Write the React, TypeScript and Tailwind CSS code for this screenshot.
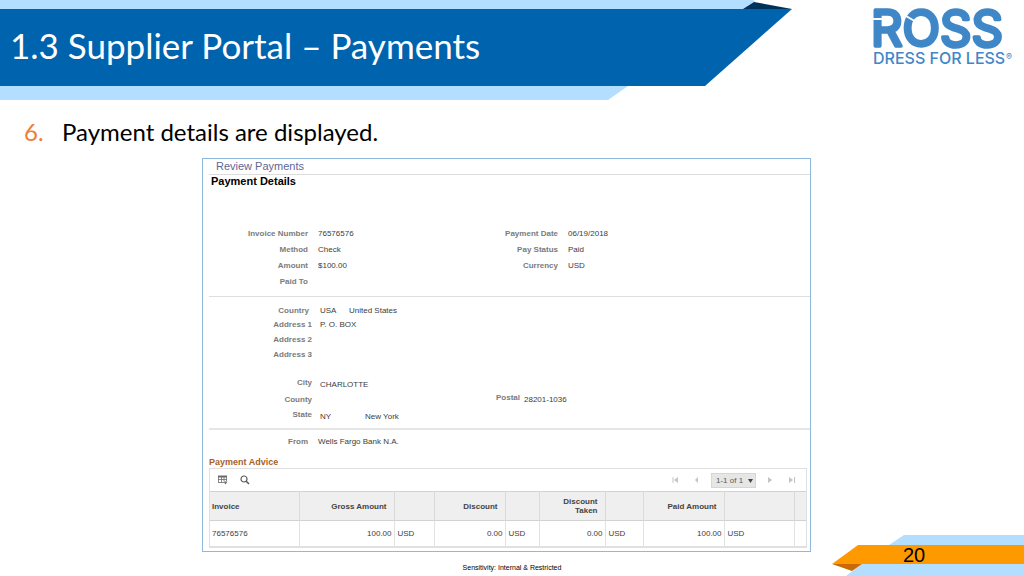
import type { ReactNode } from "react";

interface Field {
  label: string;
  value?: ReactNode;
}

const paymentFields: Field[] = [
  { label: "Invoice Number", value: "76576576" },
  { label: "Method", value: "Check" },
  { label: "Amount", value: "$100.00" },
  { label: "Paid To" },
];

const statusFields: Field[] = [
  { label: "Payment Date", value: "06/19/2018" },
  { label: "Pay Status", value: "Paid" },
  { label: "Currency", value: "USD" },
];

const streetFields: Field[] = [
  { label: "Address 1", value: "P. O. BOX" },
  { label: "Address 2" },
  { label: "Address 3" },
];

const adviceRows = [
  { invoice: "76576576", gross: "100.00", discount: "0.00", taken: "0.00", paid: "100.00", currency: "USD" },
];

export default function App() {
  return (
    <div className="relative flex min-h-screen flex-col bg-white font-['Liberation_Sans',sans-serif] text-black">
      <SlideHeader />
      <main className="flex-1 pb-6">
        <ol className="flex h-[58px] items-center pt-[6px] pl-6 font-[Lato,sans-serif] text-[24px] leading-7">
          <li className="flex">
            <span className="w-[38px] text-[#ed7d31]">6.</span>
            <span>Payment details are displayed.</span>
          </li>
        </ol>
        <div className="pr-[213px] pl-[202px]">
          <ReviewPayments />
        </div>
      </main>
      <SlideFooter />
    </div>
  );
}

function SlideHeader() {
  return (
    <header className="relative flex h-[100px] justify-between">
      <svg className="absolute top-0 left-0" width="792" height="100" viewBox="0 0 792 100" aria-hidden="true">
        <path d="M0 0H757L628 86L608 100H0Z" fill="#b3deff" />
        <path d="M743 9L754 2L792 9Z" fill="#00315a" />
        <path d="M752 0H780V1.500H757Z" fill="#fff" />
        <path d="M0 9H792L705 86H0Z" fill="#0063ae" />
      </svg>
      <h1 className="relative pt-[22px] pl-[10px] font-[Lato,sans-serif] text-[35px] leading-[46px] text-white">
        1.3 Supplier Portal – Payments
      </h1>
      <RossLogo />
    </header>
  );
}

function RossLogo() {
  return (
    <svg className="relative mr-1 shrink-0" width="150" height="72" viewBox="0 0 150 72" role="img" aria-label="Ross Dress for Less">
      <g fill="#3f87c7" stroke="#3f87c7" strokeLinejoin="round" fontFamily="Inter, sans-serif">
        <text x="1" y="46" fontSize="49" fontWeight="400" strokeWidth="3.500">ROSS</text>
        <text x="3" y="64" fontSize="16" fontWeight="500" strokeWidth="0">DRESS FOR LESS</text>
        <text x="136" y="60" fontSize="9" strokeWidth="0">®</text>
      </g>
      {/* stencil cuts through the R and the O */}
      <g stroke="#fff" strokeWidth="2" fill="none">
        <path d="M2 19H12" />
        <path d="M36 16L48 23" />
      </g>
    </svg>
  );
}

function ReviewPayments() {
  return (
    <section className="border border-[#8fb8de] pb-[3px] pl-[6px] text-[8px] text-[#3c3c3c]">
      <h2 className="h-4 border-b border-[#dcdcdc] pl-[7px] text-[11px] leading-[14px] text-[#5d6799]">Review Payments</h2>
      <h3 className="pl-[2px] text-[11px] leading-[13px] font-bold text-black">Payment Details</h3>

      <div className="flex border-b border-[#dedede] pt-[38px] pb-[6px]">
        <FieldList fields={paymentFields} />
        <FieldList fields={statusFields} />
      </div>

      <div className="flex border-b-2 border-[#e6e6e6] pt-[7px] pb-1">
        <dl className="grid w-[250px] grid-cols-[103px_1fr] gap-x-2 leading-[15px]">
          <Label className="pr-[3px] leading-[13px]">Country</Label>
          <dd className="flex leading-[13px]">
            <span className="w-[29px]">USA</span>
            United States
          </dd>
          {streetFields.map((f) => (
            <FieldRow key={f.label} field={f} />
          ))}
          <Label className="mt-[13px]">City</Label>
          <dd className="mt-[15px] leading-[15px]">CHARLOTTE</dd>
          <Label>County</Label>
          <dd />
          <Label>State</Label>
          <dd className="flex pt-[2px]">
            <span className="w-[45px]">NY</span>
            New York
          </dd>
        </dl>
        <dl className="grid grid-cols-[61px_1fr] content-end gap-x-1 pb-[17px] leading-[15px]">
          <Label>Postal</Label>
          <dd className="pt-[2px]">28201-1036</dd>
        </dl>
      </div>

      <dl className="grid grid-cols-[99px_1fr] gap-x-[10px] pt-1 leading-4">
        <Label>From</Label>
        <dd>Wells Fargo Bank N.A.</dd>
      </dl>

      <h4 className="mt-[7px] text-[9px] leading-[11px] font-bold text-[#a75f2c]">Payment Advice</h4>
      <PaymentAdvice />
    </section>
  );
}

function FieldList({ fields }: { fields: Field[] }) {
  return (
    <dl className="grid w-[250px] grid-cols-[99px_1fr] content-start gap-x-[10px] leading-4">
      {fields.map((f) => (
        <FieldRow key={f.label} field={f} />
      ))}
    </dl>
  );
}

function FieldRow({ field }: { field: Field }) {
  return (
    <>
      <Label>{field.label}</Label>
      <dd>{field.value}</dd>
    </>
  );
}

function Label({ children, className = "" }: { children: ReactNode; className?: string }) {
  return <dt className={`text-right font-bold text-[#7b7b7b] ${className}`}>{children}</dt>;
}

function PaymentAdvice() {
  return (
    <div className="mr-[3px] border border-[#e0e0e0]">
      <div className="flex h-[22px] items-center justify-between pr-[10px] pl-2">
        <div className="flex items-center gap-3">
          <button aria-label="Personalize grid">
            <svg width="10" height="10" viewBox="0 0 10 10" fill="none" stroke="#6b6b6b">
              <path d="M0 1.500H9" strokeWidth="2" />
              <path d="M.5 2V7.500M3.500 2V7.500M6 2V6M8.500 2V6M0 4.500H9M0 7.500H6" strokeWidth=".8" />
              <path d="M5.500 6.500H9.500L7.500 9.500Z" fill="#6b6b6b" stroke="none" />
            </svg>
          </button>
          <button aria-label="Find">
            <svg width="10" height="10" viewBox="0 0 10 10" fill="none" stroke="#5c5c5c">
              <circle cx="4" cy="4" r="3" strokeWidth="1.200" />
              <path d="M6.200 6.200L9 9" strokeWidth="1.600" />
            </svg>
          </button>
        </div>
        <div className="flex items-center gap-[10px]">
          <PagerButton label="First">
            <path d="M2 1V7" />
            <path d="M7 1V7L3 4Z" fill="#c4c4c4" stroke="none" />
          </PagerButton>
          <PagerButton label="Previous" className="mx-1">
            <path d="M5 1V7L2 4Z" fill="#c4c4c4" stroke="none" />
          </PagerButton>
          <div className="relative -mx-1">
            <select
              aria-label="Rows shown"
              className="block h-[15px] w-[45px] appearance-none border border-[#d6d6d6] bg-[#e6e6e6] pl-1 text-[8px] leading-[13px] text-[#5a5a5a]"
            >
              <option>1-1 of 1</option>
            </select>
            <svg className="pointer-events-none absolute top-[6px] right-[3px]" width="5" height="4" viewBox="0 0 5 4">
              <path d="M0 0H5L2.500 4Z" fill="#444" />
            </svg>
          </div>
          <PagerButton label="Next" className="mx-1">
            <path d="M2 1V7L6 4Z" fill="#c4c4c4" stroke="none" />
          </PagerButton>
          <PagerButton label="Last">
            <path d="M1 1V7L5 4Z" fill="#c4c4c4" stroke="none" />
            <path d="M6.500 1V7" />
          </PagerButton>
        </div>
      </div>

      <table className="w-full table-fixed border-collapse">
        <colgroup>
          <col className="w-[89px]" />
          <col className="w-[95px]" />
          <col className="w-[40px]" />
          <col className="w-[71px]" />
          <col className="w-[34px]" />
          <col className="w-[66px]" />
          <col className="w-[38px]" />
          <col className="w-[81px]" />
          <col className="w-[70px]" />
          <col />
        </colgroup>
        <thead>
          <tr className="h-[29px] divide-x divide-[#dadada] border-y border-[#d2d2d2] bg-[#efefef] text-right leading-[9px] text-[#444]">
            <th className="pl-[2px] text-left">Invoice</th>
            <th className="pr-[7px]">Gross Amount</th>
            <td />
            <th className="pr-[7px]">Discount</th>
            <td />
            <th className="pr-[7px] pl-4">Discount Taken</th>
            <td />
            <th className="pr-[7px]">Paid Amount</th>
            <td />
            <td />
          </tr>
        </thead>
        <tbody>
          {adviceRows.map((row) => (
            <tr key={row.invoice} className="h-[26px] divide-x divide-[#e2e2e2] border-b border-[#e0e0e0]">
              <td className="pl-[2px]">{row.invoice}</td>
              <td className="pr-[2px] text-right">{row.gross}</td>
              <td className="pl-[3px]">{row.currency}</td>
              <td className="pr-[2px] text-right">{row.discount}</td>
              <td className="pl-[3px]">{row.currency}</td>
              <td className="pr-[2px] text-right">{row.taken}</td>
              <td className="pl-[3px]">{row.currency}</td>
              <td className="pr-[2px] text-right">{row.paid}</td>
              <td className="pl-[3px]">{row.currency}</td>
              <td />
            </tr>
          ))}
        </tbody>
      </table>
    </div>
  );
}

function PagerButton({
  label,
  className = "",
  children,
}: {
  label: string;
  className?: string;
  children: ReactNode;
}) {
  return (
    <button aria-label={label} className={className}>
      <svg width="8" height="8" viewBox="0 0 8 8" fill="none" stroke="#c4c4c4">
        {children}
      </svg>
    </button>
  );
}

function SlideFooter() {
  return (
    <footer className="absolute inset-x-0 bottom-0 flex h-[42px] items-end justify-center">
      <p className="pb-1 text-[7px] leading-[9px]">Sensitivity: Internal &amp; Restricted</p>
      <div className="absolute right-0 bottom-0 h-[42px] w-[193px]">
        <svg className="absolute inset-0" width="193" height="42" viewBox="0 0 193 42" aria-hidden="true">
          <path d="M73 1H193V42H15L31 30L58 11Z" fill="#b3deff" />
          <path d="M1 30H31L21 37Z" fill="#c96a05" />
          <path d="M27 11H193V30H1Z" fill="#ff9900" />
        </svg>
        <span className="relative block pt-[11px] pl-[72px] text-[20px] leading-5">20</span>
      </div>
    </footer>
  );
}
